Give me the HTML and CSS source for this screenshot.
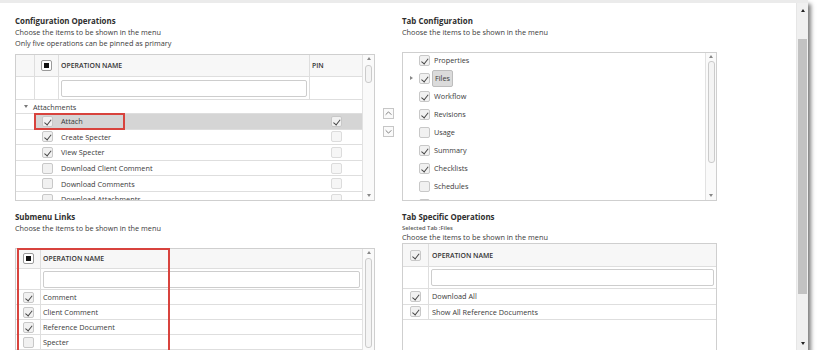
FILE: index.html
```html
<!DOCTYPE html>
<html lang="en">
<head>
  <meta charset="UTF-8" />
  <meta name="viewport" content="width=device-width, initial-scale=1.0"/>
  <title>Menu Configuration</title>
  <link rel="stylesheet" href="styles.css">
</head>
<body>
  <div class="window">
    <div class="content">

      <!-- configuration operations -->
      <section class="panel top">
        <h2 class="title">Configuration Operations</h2>
        <p class="hint">Choose the items to be shown in the menu</p>
        <p class="hint">Only five operations can be pinned as primary</p>

        <div class="grid ops">
          <div class="grid-body">
            <div class="row head">
              <div class="c-indent"></div>
              <div class="c-check"><span class="cb all"></span></div>
              <div class="c-name">OPERATION NAME</div>
              <div class="c-pin">PIN</div>
            </div>
            <div class="row filter">
              <div class="c-indent"></div>
              <div class="c-check"></div>
              <div class="c-name"><input type="text" class="search"></div>
              <div class="c-pin"></div>
            </div>
            <div class="row group"><span class="caret"></span>Attachments</div>
            <div class="row item selected">
              <div class="c-indent"></div>
              <div class="c-check"><span class="cb on"></span></div>
              <div class="c-name">Attach</div>
              <div class="c-pin"><span class="cb on"></span></div>
              <div class="callout attach-callout"></div>
            </div>
            <div class="row item">
              <div class="c-indent"></div>
              <div class="c-check"><span class="cb on"></span></div>
              <div class="c-name">Create Specter</div>
              <div class="c-pin"><span class="cb off"></span></div>
            </div>
            <div class="row item">
              <div class="c-indent"></div>
              <div class="c-check"><span class="cb on"></span></div>
              <div class="c-name">View Specter</div>
              <div class="c-pin"><span class="cb off"></span></div>
            </div>
            <div class="row item">
              <div class="c-indent"></div>
              <div class="c-check"><span class="cb"></span></div>
              <div class="c-name">Download Client Comment</div>
              <div class="c-pin"><span class="cb off"></span></div>
            </div>
            <div class="row item">
              <div class="c-indent"></div>
              <div class="c-check"><span class="cb"></span></div>
              <div class="c-name">Download Comments</div>
              <div class="c-pin"><span class="cb off"></span></div>
            </div>
            <div class="row item">
              <div class="c-indent"></div>
              <div class="c-check"><span class="cb"></span></div>
              <div class="c-name">Download Attachments</div>
              <div class="c-pin"><span class="cb off"></span></div>
            </div>
          </div>
          <div class="vscroll ops-scroll">
            <span class="arr up"></span>
            <span class="thumb"></span>
            <span class="arr down"></span>
          </div>
        </div>
      </section>

      <!-- move up / down -->
      <div class="mover">
        <button class="move-btn">
          <svg viewBox="0 0 11 11" width="9" height="9"><path d="M2 7 L5.5 3.5 L9 7" fill="none" stroke="#666" stroke-width="1"/></svg>
        </button>
        <button class="move-btn">
          <svg viewBox="0 0 11 11" width="9" height="9"><path d="M2 4 L5.5 7.5 L9 4" fill="none" stroke="#666" stroke-width="1"/></svg>
        </button>
      </div>

      <!-- tab configuration -->
      <section class="panel top">
        <h2 class="title">Tab Configuration</h2>
        <p class="hint">Choose the items to be shown in the menu</p>

        <div class="tabs-box">
          <div class="tabs-list">
            <div class="tab-item"><span class="expander"></span><span class="cb on"></span><span class="tab-name">Properties</span></div>
            <div class="tab-item"><span class="expander closed"></span><span class="cb on"></span><span class="tab-name current">Files</span></div>
            <div class="tab-item"><span class="expander"></span><span class="cb on"></span><span class="tab-name">Workflow</span></div>
            <div class="tab-item"><span class="expander"></span><span class="cb on"></span><span class="tab-name">Revisions</span></div>
            <div class="tab-item"><span class="expander"></span><span class="cb"></span><span class="tab-name">Usage</span></div>
            <div class="tab-item"><span class="expander"></span><span class="cb on"></span><span class="tab-name">Summary</span></div>
            <div class="tab-item"><span class="expander"></span><span class="cb on"></span><span class="tab-name">Checklists</span></div>
            <div class="tab-item"><span class="expander"></span><span class="cb"></span><span class="tab-name">Schedules</span></div>
            <div class="tab-item"><span class="expander"></span><span class="cb"></span><span class="tab-name"></span></div>
          </div>
          <div class="vscroll tabs-scroll">
            <span class="arr up"></span>
            <span class="thumb"></span>
            <span class="arr down"></span>
          </div>
        </div>
      </section>

      <!-- submenu links -->
      <section class="panel bottom">
        <h2 class="title">Submenu Links</h2>
        <p class="hint">Choose the items to be shown in the menu</p>

        <div class="grid links">
          <div class="grid-body">
            <div class="row head">
              <div class="c-check"><span class="cb all"></span></div>
              <div class="c-name">OPERATION NAME</div>
            </div>
            <div class="row filter">
              <div class="c-check"></div>
              <div class="c-name"><input type="text" class="search"></div>
            </div>
            <div class="row item">
              <div class="c-check"><span class="cb on"></span></div>
              <div class="c-name">Comment</div>
            </div>
            <div class="row item">
              <div class="c-check"><span class="cb on"></span></div>
              <div class="c-name">Client Comment</div>
            </div>
            <div class="row item">
              <div class="c-check"><span class="cb on"></span></div>
              <div class="c-name">Reference Document</div>
            </div>
            <div class="row item">
              <div class="c-check"><span class="cb"></span></div>
              <div class="c-name">Specter</div>
            </div>
          </div>
          <div class="vscroll links-scroll">
            <span class="arr up"></span>
            <span class="thumb"></span>
          </div>
          <div class="callout links-callout"></div>
        </div>
      </section>

      <div></div>

      <!-- tab specific operations -->
      <section class="panel bottom">
        <h2 class="title">Tab Specific Operations</h2>
        <p class="selected-tab">Selected Tab :Files</p>
        <p class="hint">Choose the items to be shown in the menu</p>

        <div class="grid tab-ops">
          <div class="grid-body">
            <div class="row head">
              <div class="c-check"><span class="cb on"></span></div>
              <div class="c-name">OPERATION NAME</div>
            </div>
            <div class="row filter">
              <div class="c-check"></div>
              <div class="c-name"><input type="text" class="search"></div>
            </div>
            <div class="row item">
              <div class="c-check"><span class="cb on"></span></div>
              <div class="c-name">Download All</div>
            </div>
            <div class="row item">
              <div class="c-check"><span class="cb on"></span></div>
              <div class="c-name">Show All Reference Documents</div>
            </div>
          </div>
        </div>
      </section>

    </div>

    <div class="page-scroll">
      <span class="arr up dark"></span>
      <span class="thumb"></span>
      <span class="arr down dark"></span>
    </div>
  </div>
</body>
</html>
```

FILE: styles.css
```css
* {
  box-sizing: border-box;
}

body {
  margin: 0;
  background: #fff;
  font-family: 'Open Sans', 'Liberation Sans', sans-serif;
  font-size: 7.3px;
  color: #3a3a3a;
}

h2, p {
  margin: 0;
}

.window {
  width: 808px;
  height: 350px;
  background: #fff;
  border-top: 3px solid #ebebeb;
  box-shadow: 3px 4px 4px rgba(0,0,0,0.5);
  display: flex;
  overflow: hidden;
}

.content {
  flex: 1;
  min-width: 0;
  display: grid;
  grid-template-columns: 360px 27px 315px;
  grid-template-rows: 202px 1fr;
  padding-left: 15px;
}

.panel.top {
  padding-top: 12px;
}

.panel.bottom {
  padding-top: 6px;
  min-height: 0;
}

.title {
  font-size: 7.9px;
  font-weight: 700;
  line-height: 12px;
  color: #2e2e2e;
}

.hint {
  line-height: 11px;
}

.selected-tab {
  margin-top: 1px;
  font-size: 5.8px;
  font-weight: 600;
  line-height: 8px;
  color: #555;
}

/* checkboxes */
.cb {
  display: inline-block;
  position: relative;
  flex: none;
  width: 11px;
  height: 11px;
  border: 1px solid #c8c8c8;
  border-radius: 2px;
  background: #f1f1f1;
}

.cb.off {
  border-color: #dcdcdc;
  background: #f6f6f6;
}

.cb.on::after {
  content: "";
  position: absolute;
  left: 3.3px;
  top: 1px;
  width: 2.6px;
  height: 5.6px;
  border: solid #444;
  border-width: 0 1.3px 1.3px 0;
  transform: rotate(38deg);
}

.cb.all {
  background: #fff;
  border-color: #9a9a9a;
}

.cb.all::after {
  content: "";
  position: absolute;
  left: 2px;
  top: 2px;
  width: 5px;
  height: 5px;
  background: #111;
}

/* grids */
.grid {
  display: flex;
  position: relative;
  border: 1px solid #cfcfcf;
}

.grid-body {
  flex: 1;
  min-width: 0;
  overflow: hidden;
}

.row {
  display: flex;
  border-bottom: 1px solid #dedede;
}

.row > div {
  display: flex;
  align-items: center;
}

.row.head {
  background: #f7f7f7;
  font-size: 6.9px;
  font-weight: 600;
  color: #333;
}

.row.head > div,
.row.filter > div {
  border-right: 1px solid #dedede;
}

.row.head > div:last-child,
.row.filter > div:last-child {
  border-right: none;
}

.c-check {
  justify-content: center;
}

.c-name {
  flex: 1;
  min-width: 0;
  padding-left: 2px;
  white-space: nowrap;
}

.search {
  width: 100%;
  height: 17px;
  border: 1px solid #cdcdcd;
  border-radius: 2px;
  background: #fff;
  margin: 0;
}

.callout {
  position: absolute;
  border: 2px solid #d8433d;
  pointer-events: none;
}

/* configuration operations grid */
.ops {
  margin-top: 5px;
  height: 147px;
}

.ops .c-indent {
  width: 19px;
  border-right: 1px solid transparent;
}

.ops .c-check {
  width: 24px;
}

.ops .c-pin {
  width: 52px;
  justify-content: center;
}

.ops .c-name {
  padding-left: 2px;
}

.ops .row.head .c-pin {
  justify-content: flex-start;
  padding-left: 2px;
}

.ops .row.head {
  height: 22px;
}

.ops .row.filter {
  height: 23px;
}

.ops .row.filter .c-name {
  padding: 0 2px;
}

.row.group {
  height: 14px;
  align-items: center;
}

.caret {
  width: 0;
  height: 0;
  margin: 0 5px 0 8px;
  border-left: 2.5px solid transparent;
  border-right: 2.5px solid transparent;
  border-top: 3px solid #777;
}

.ops .row.item {
  height: 15.6px;
  position: relative;
}

.row.item.selected > div:not(.c-indent):not(.callout) {
  background: #d5d5d5;
}

.attach-callout {
  left: 18px;
  top: -1px;
  width: 91px;
  height: 17px;
}

/* scrollbars */
.vscroll {
  width: 12px;
  display: flex;
  flex-direction: column;
  align-items: center;
  border-left: 1px solid #e2e2e2;
  background: #fafafa;
  padding: 2px 0 3px;
}

.arr {
  flex: none;
  width: 0;
  height: 0;
  border-left: 2.5px solid transparent;
  border-right: 2.5px solid transparent;
}

.arr.up {
  border-bottom: 3px solid #888;
}

.arr.down {
  margin-top: auto;
  border-top: 3px solid #888;
}

.arr.dark.up {
  border-bottom-color: #222;
}

.arr.dark.down {
  border-top-color: #222;
}

.vscroll .thumb {
  width: 7px;
  border: 1px solid #cbcbcb;
  border-radius: 3px;
  background: #f4f4f4;
}

.ops-scroll .thumb {
  margin-top: 5px;
  height: 18px;
}

.tabs-scroll .thumb {
  margin-top: 3px;
  height: 102px;
}

.links-scroll .thumb {
  margin-top: 4px;
  height: 110px;
}

/* mover buttons */
.mover {
  display: flex;
  flex-direction: column;
  gap: 7px;
  padding: 105px 0 0 8px;
}

.move-btn {
  width: 11px;
  height: 11px;
  padding: 0;
  border: 1px solid #c6c6c6;
  background: #fafafa;
  display: flex;
  align-items: center;
  justify-content: center;
}

/* tab configuration */
.tabs-box {
  margin-top: 14px;
  height: 149px;
  display: flex;
  border: 1px solid #cfcfcf;
}

.tabs-list {
  flex: 1;
  overflow: hidden;
}

.tab-item {
  height: 18px;
  display: flex;
  align-items: flex-start;
}

.tab-item .cb {
  margin-top: 2px;
}

.expander {
  width: 16px;
  height: 15px;
  flex: none;
  position: relative;
}

.expander.closed::after {
  content: "";
  position: absolute;
  left: 7px;
  top: 5px;
  border-top: 2.5px solid transparent;
  border-bottom: 2.5px solid transparent;
  border-left: 3px solid #888;
}

.tab-name {
  line-height: 15px;
  padding-left: 4px;
}

.tab-name.current {
  margin-left: 2px;
  margin-top: -1px;
  padding: 0 2px;
  line-height: 15px;
  border: 1px solid #bdbdbd;
  border-radius: 2px;
  background: #dbdbdb;
}

.tabs-scroll {
  width: 11px;
}

/* submenu links grid */
.links {
  margin-top: 14px;
  height: 104px;
}

.links .c-check {
  width: 25px;
  border-right: 1px solid #dedede;
}

.links .c-name {
  padding-left: 2px;
}

.links .row.head {
  height: 20px;
}

.links .row.filter {
  height: 21px;
}

.links .row.filter .c-name {
  padding: 0 2px;
}

.links .row.item {
  height: 15px;
}

.links-callout {
  left: 1px;
  top: -1px;
  width: 153px;
  height: 105px;
}

/* tab specific operations grid */
.tab-ops {
  height: 140px;
}

.tab-ops .c-check {
  width: 26px;
  border-right: 1px solid #dedede;
}

.tab-ops .c-name {
  padding-left: 3px;
}

.tab-ops .row.head {
  height: 23px;
}

.tab-ops .row.filter {
  height: 22px;
}

.tab-ops .row.filter .c-name {
  padding: 0 2px;
}

.tab-ops .row.item {
  height: 15.5px;
}

/* window scrollbar */
.page-scroll {
  width: 12px;
  flex: none;
  display: flex;
  flex-direction: column;
  align-items: center;
  background: #f0f0f0;
  border-left: 1px solid #e6e6e6;
  padding: 6px 0 5px;
}

.page-scroll .thumb {
  width: 9px;
  height: 255px;
  margin-top: 27px;
  background: #c2c2c2;
}
```
